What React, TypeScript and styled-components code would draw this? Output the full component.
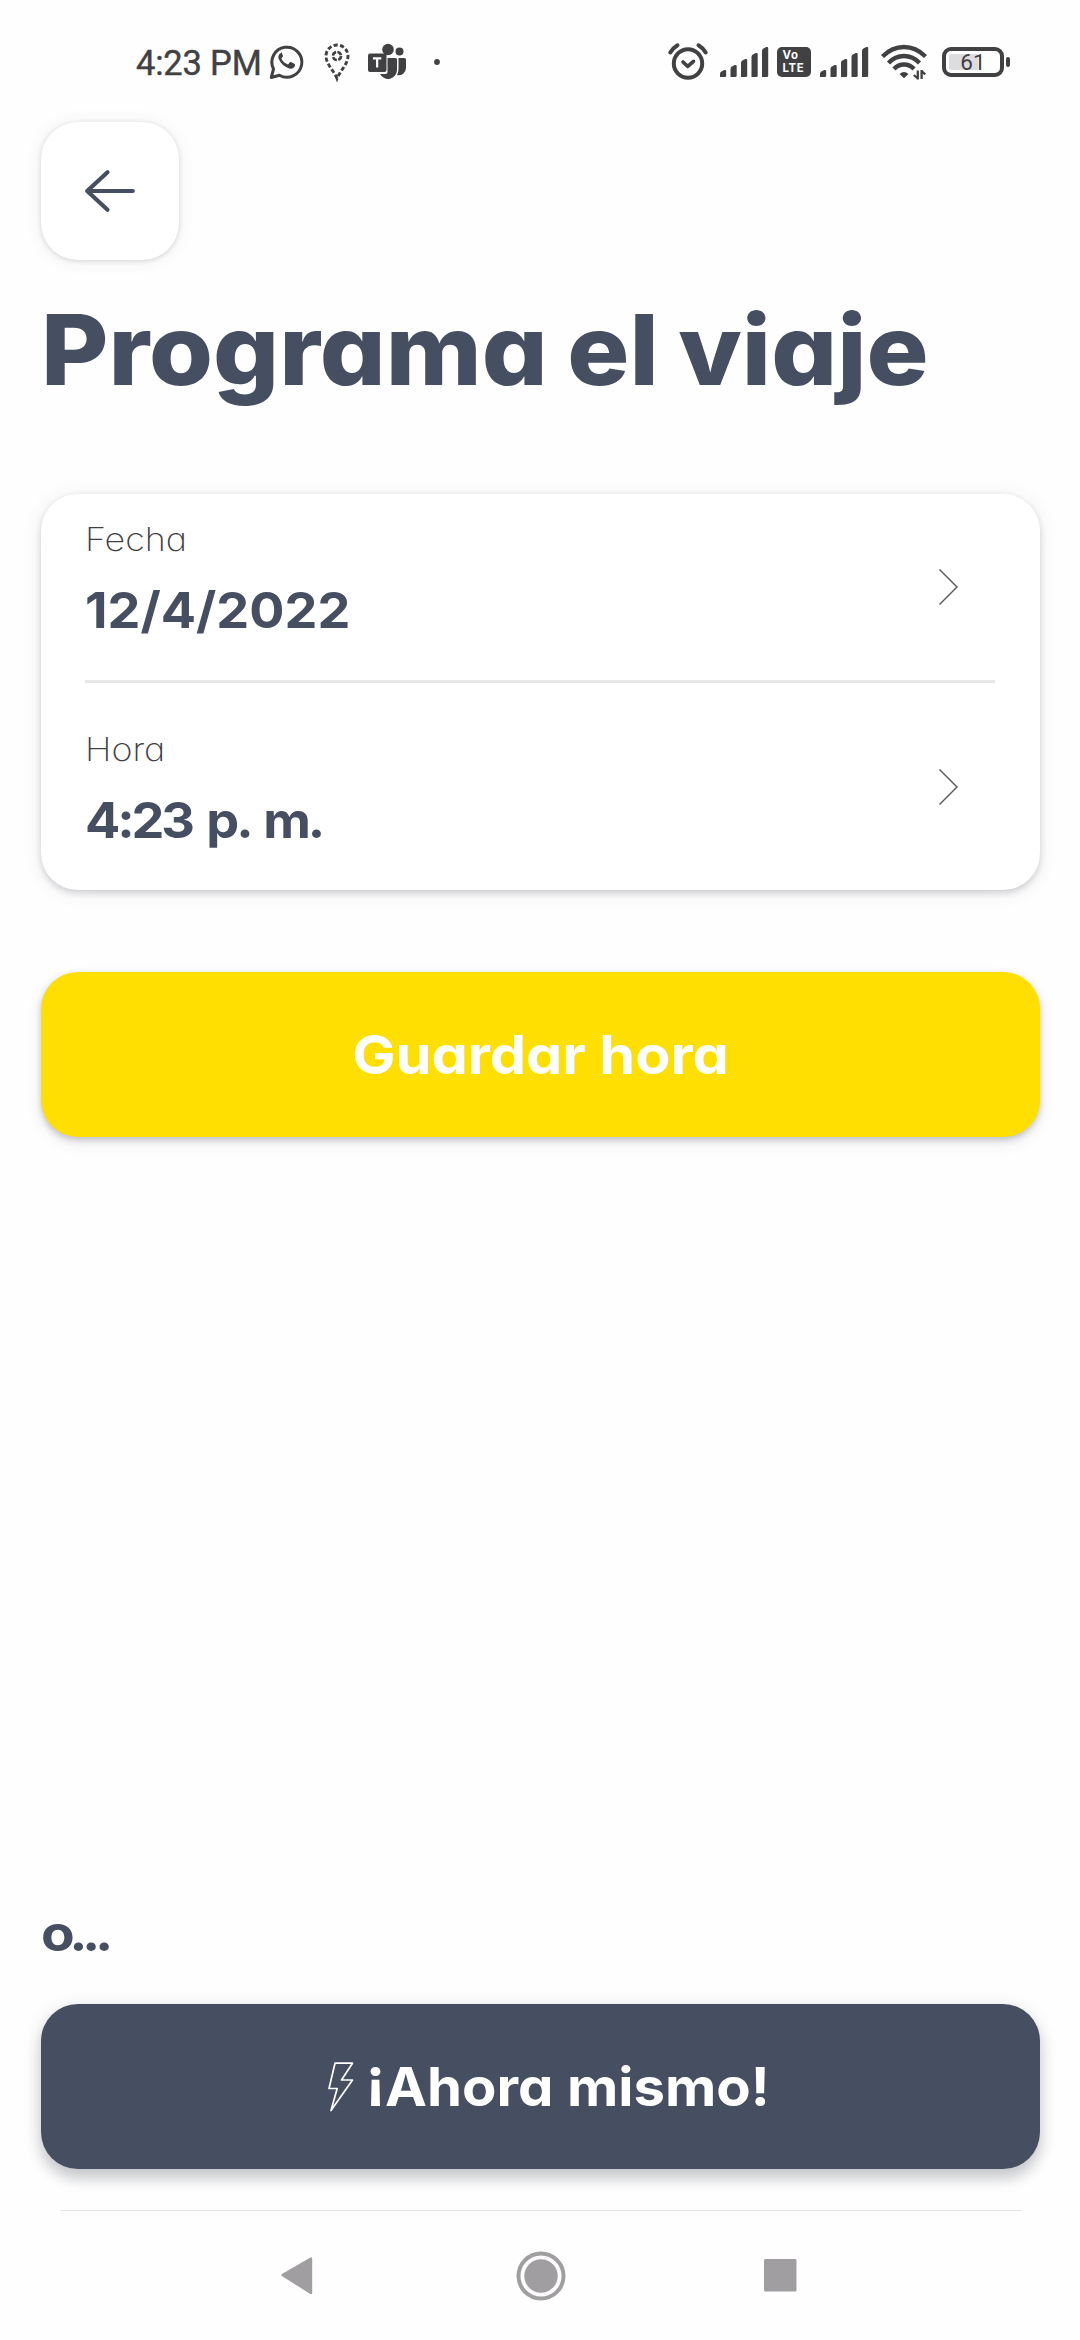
import React from 'react';
import styled, { createGlobalStyle } from 'styled-components';

const INK = '#464e62';
const STATUS = '#414043';

const GlobalStyle = createGlobalStyle`
  * { box-sizing: border-box; }
  body { margin: 0; background: #fefefe; }
`;

const Screen = styled.div`
  width: 1080px;
  height: 2340px;
  display: flex;
  flex-direction: column;
  overflow: hidden;
  background: #fefefe;
  color: ${INK};
  font-family: Inter, 'Liberation Sans', sans-serif;
  font-feature-settings: 'cv11', 'ss03';
`;

const StatusBar = styled.header`
  height: 122px;
  flex: none;
  display: flex;
  align-items: flex-start;
  justify-content: space-between;
  padding: 42px 70px 0 136px;
`;

const StatusGroup = styled.div`
  display: flex;
  align-items: center;
  height: 40px;
`;

const Clock = styled.span`
  width: 133px;
  padding-top: 2px;
  font: 400 34.5px/40px Roboto, sans-serif;
  letter-spacing: -0.2px;
  color: ${STATUS};
  -webkit-text-stroke: 0.4px ${STATUS};
  white-space: nowrap;
`;

const Glyph = styled.svg<{ $before?: number }>`
  display: block;
  flex: none;
  margin-left: ${(p) => p.$before ?? 0}px;
  overflow: visible;
`;

const Content = styled.main`
  flex: 1;
  display: flex;
  flex-direction: column;
  padding: 0 40px 0 41px;
`;

const BackButton = styled.button`
  width: 138px;
  height: 138px;
  flex: none;
  display: flex;
  align-items: center;
  justify-content: center;
  border: 0;
  border-radius: 37px;
  background: #fff;
  box-shadow: 0 1px 5px rgba(60, 50, 70, 0.18), 0 1px 18px rgba(60, 50, 70, 0.07);
`;

const Title = styled.h1`
  margin: 40px 0 94px;
  font-size: 98px;
  line-height: 100px;
  font-weight: 800;
  word-spacing: -3px;
  white-space: nowrap;
  transform: scaleX(1.056);
  transform-origin: left;
`;

const Card = styled.section`
  height: 396px;
  flex: none;
  display: flex;
  flex-direction: column;
  padding: 0 44px;
  border-radius: 37px;
  background: #fff;
  box-shadow: 0 3px 6px rgba(60, 50, 70, 0.2), 0 2px 20px rgba(60, 50, 70, 0.09);
`;

const Row = styled.div`
  display: flex;
  align-items: center;
  justify-content: space-between;
  padding-right: 38px;
`;

const Field = styled.div<{ $top: number }>`
  display: flex;
  flex-direction: column;
  gap: 20px;
  padding: ${(p) => p.$top}px 0 40px;
`;

const Label = styled.span`
  font-size: 32px;
  line-height: 40px;
  font-weight: 200;
  color: #3f4046;
  transform: scaleX(1.12);
  transform-origin: left;
`;

const Value = styled.span<{ $track: number; $word: number }>`
  font-size: 50px;
  line-height: 60px;
  font-weight: 700;
  letter-spacing: ${(p) => p.$track}px;
  word-spacing: ${(p) => p.$word}px;
  white-space: pre;
  transform: scaleX(1.045);
  transform-origin: left;
`;

const Divider = styled.hr`
  width: 910px;
  height: 3px;
  flex: none;
  margin: 0;
  border: 0;
  background: #e7e6e8;
`;

const ActionButton = styled.button<{ $fill: string; $shadow: string }>`
  height: 165px;
  flex: none;
  display: flex;
  align-items: center;
  justify-content: center;
  gap: 12px;
  padding: 0;
  border: 0;
  border-radius: 37px;
  background: ${(p) => p.$fill};
  box-shadow: ${(p) => p.$shadow};
  color: #fff;
  font: inherit;
  font-feature-settings: 'cv11', 'ss03', 'case';
  font-size: 54px;
  font-weight: 700;
`;

const SaveSlot = styled.div`
  display: flex;
  flex-direction: column;
  margin-top: 82px;
`;

const NowSlot = styled.div`
  display: flex;
  flex-direction: column;
  margin-top: auto;
  padding-bottom: 41px;
`;

const ButtonText = styled.span<{ $stretch: number; $origin: string }>`
  line-height: 66px;
  white-space: nowrap;
  transform: scaleX(${(p) => p.$stretch});
  transform-origin: ${(p) => p.$origin};
`;

const Or = styled.p`
  margin: 0 0 41px;
  font-size: 50px;
  line-height: 60px;
  font-weight: 700;
  letter-spacing: -5px;
  transform: scaleX(1.1);
  transform-origin: left;
`;

const NavBar = styled.nav`
  height: 130px;
  flex: none;
  display: flex;
  align-items: center;
  justify-content: space-between;
  margin: 0 58px 0 60px;
  padding: 0 225px 0 221px;
  border-top: 1px solid #e6e4e8;
`;

const WhatsApp = () => (
  <Glyph width="36" height="36" viewBox="0 0 36 36" fill="none">
    <path d="M2.300 33.500 4.500 25A15 15 0 1 1 10.400 31.200Z" stroke={STATUS} strokeWidth="3" strokeLinejoin="round" />
    <path d="M12.200 9.300c-.7 0-1.500.3-2.100 1-1.400 1.600-1.600 3.500-.8 5.700 2.200 5.200 6.300 8.800 11.500 10.300 2.600.7 5.300-.6 6.100-3 .3-1 .2-1.700-.2-2l-4.100-2.100c-.5-.2-.9-.1-1.200.3l-1.500 1.900c-.3.4-.7.5-1.200.3-2.800-1.200-4.900-3-6.300-5.700-.3-.5-.2-.8.1-1.200l1.200-1.500c.2-.4.3-.7.1-1.200l-1.600-3.900c-.2-.4-.5-.6-.9-.6Z" transform="translate(1.200 .4) scale(.92)" fill={STATUS} />
  </Glyph>
);

const DottedPin = () => (
  <Glyph $before={19} width="26" height="38" viewBox="0 0 26 38" fill="none" stroke={STATUS}>
    <path d="M13 35.500C10 28 2 21 2 13a11 11 0 0 1 22 0c0 8-8 15-11 22.500Z" strokeWidth="2.900" strokeDasharray="4.200 2.300" />
    <circle cx="13" cy="13" r="4" strokeWidth="2.600" strokeDasharray="4.800 1.480" />
  </Glyph>
);

const Teams = () => (
  <Glyph $before={18} width="39" height="38" viewBox="0 0 39 38" fill={STATUS}>
    <circle cx="20" cy="6.500" r="5.800" />
    <circle cx="31.500" cy="8.500" r="4" />
    <path d="M30.500 15H36.500Q38 15 38 16.500V25a7.500 7.500 0 0 1-9 7.200Q30.500 29.500 30.500 26Z" />
    <path d="M19.500 15H27.500Q29 15 29 16.500V27a9 9 0 0 1-17 4H17.500Q19.500 31 19.500 29Z" />
    <rect x="0" y="10.500" width="18.500" height="18.500" rx="2" />
    <path d="M5 15.300H13.300M9.150 15.300V24.500" stroke="#fefefe" strokeWidth="2.200" />
  </Glyph>
);

const Alarm = () => (
  <Glyph width="40" height="38" viewBox="0 0 40 38" fill="none" stroke={STATUS} strokeLinecap="round" strokeLinejoin="round">
    <circle cx="20" cy="20.500" r="14.200" strokeWidth="4" />
    <path d="M2.300 9.500Q5 5 9.500 2.300M30.500 2.300Q35 5 37.700 9.500" strokeWidth="4" />
    <path d="M15 19 19.700 23.300 25.500 18.300" strokeWidth="3.600" />
  </Glyph>
);

const BARS = [
  [0, 24],
  [10.5, 19],
  [21, 13],
  [31.5, 7],
  [42, 1],
];

const Signal = ({ before }: { before: number }) => (
  <Glyph $before={before} width="48" height="32" viewBox="0 0 48 32" fill={STATUS}>
    {BARS.map(([x, y]) => (
      <path
        key={x}
        d={`M${x} 31V${y + 4}Q${x} ${y + 2.5} ${x + 1} ${y + 1.8}L${x + 4.2} ${y}Q${x + 6.2} ${y - 0.5} ${x + 6.2} ${y + 1}V29.5Q${x + 6.2} 31 ${x + 4.7} 31Z`}
      />
    ))}
  </Glyph>
);

const VolteBadge = styled.span`
  width: 34px;
  height: 30px;
  margin-left: 9px;
  padding: 2px 0 0 5.5px;
  display: flex;
  flex-direction: column;
  border-radius: 5px;
  background: ${STATUS};
  color: #fefefe;
  font: 700 11.4px/13px Inter, sans-serif;
  letter-spacing: 0.6px;
`;

const Wifi = () => (
  <Glyph $before={13} width="47" height="36" viewBox="0 0 47 36" fill="none" stroke={STATUS} strokeWidth="4.300">
    <path d="M1.500 12.500Q11 3 23 3T44.500 12.500" />
    <path d="M7.500 19Q14 12 23 12T38.500 19" />
    <path d="M13 25Q17 20.500 23 20.500T33 25" />
    <path d="M18.500 30Q23 26 27.500 30L23 34.300Z" fill={STATUS} stroke="none" />
    <path d="M36.800 35.500V26.500M36.800 34.500 32.800 31M40.600 26V35M40.600 27 44.200 30.300" strokeWidth="2.300" />
  </Glyph>
);

const Battery = styled.span`
  width: 62px;
  height: 30px;
  margin-left: 14px;
  padding: 3px;
  display: flex;
  border: 4px solid ${STATUS};
  border-radius: 9px;
`;

const Charge = styled.span`
  width: 48px;
  height: 16px;
  display: flex;
  align-items: center;
  justify-content: center;
  border-radius: 2px;
  background: linear-gradient(90deg, #dddcdf 61%, transparent 61%);
  color: ${STATUS};
  font: 400 22.500px/18px Roboto, sans-serif;
`;

const BatteryTip = styled.span`
  width: 4px;
  height: 10px;
  margin-left: 2px;
  border-radius: 2px;
  background: ${STATUS};
`;

const Chevron = () => (
  <Glyph width="20" height="38" viewBox="0 0 20 38" fill="none">
    <path d="M1.500 1.500 19 19 1.500 36.500" stroke="#56555a" strokeWidth="1.400" />
  </Glyph>
);

export default function App() {
  return (
    <Screen>
      <GlobalStyle />
      <StatusBar>
        <StatusGroup>
          <Clock>4:23 PM</Clock>
          <WhatsApp />
          <DottedPin />
          <Teams />
          <Glyph $before={27} width="6" height="6" viewBox="0 0 6 6">
            <circle cx="3" cy="3" r="2.900" fill={STATUS} />
          </Glyph>
        </StatusGroup>
        <StatusGroup>
          <Alarm />
          <Signal before={12} />
          <VolteBadge>
            <span>Vo</span>
            <span>LTE</span>
          </VolteBadge>
          <Signal before={9} />
          <Wifi />
          <Battery>
            <Charge>61</Charge>
          </Battery>
          <BatteryTip />
        </StatusGroup>
      </StatusBar>
      <Content>
        <BackButton aria-label="Volver">
          <Glyph width="50" height="42" viewBox="0 0 50 42" fill="none">
            <path d="M22.500 2.200 2.200 21 22.500 39.800M2.200 21H47.800" stroke={INK} strokeWidth="4.200" strokeLinecap="round" strokeLinejoin="round" />
          </Glyph>
        </BackButton>
        <Title>Programa el viaje</Title>
        <Card>
          <Row>
            <Field $top={26}>
              <Label>Fecha</Label>
              <Value $track={0} $word={0}>12/4/2022</Value>
            </Field>
            <Chevron />
          </Row>
          <Divider />
          <Row>
            <Field $top={47}>
              <Label>Hora</Label>
              <Value $track={-3} $word={5}>4:23 p. m.</Value>
            </Field>
            <Chevron />
          </Row>
        </Card>
        <SaveSlot>
          <ActionButton $fill="#fedf01" $shadow="0 3px 6px rgba(60, 60, 70, 0.26), 0 6px 16px rgba(60, 60, 70, 0.09)">
            <ButtonText $stretch={1.066} $origin="center">Guardar hora</ButtonText>
          </ActionButton>
        </SaveSlot>
        <NowSlot>
          <Or>o...</Or>
          <ActionButton $fill={INK} $shadow="0 10px 14px rgba(60, 64, 78, 0.22), 0 3px 18px rgba(60, 60, 70, 0.12)">
            <Glyph width="26" height="50" viewBox="0 0 26 50" fill="none">
              <path d="M7 1.200H24.500L13.500 18H24.500L3 48.500 9.200 26.500H1Z" stroke="#fff" strokeWidth="1.700" strokeLinejoin="round" />
            </Glyph>
            <ButtonText $stretch={1.042} $origin="left">¡Ahora mismo!</ButtonText>
          </ActionButton>
        </NowSlot>
      </Content>
      <NavBar>
        <Glyph width="32" height="38" viewBox="0 0 32 38">
          <path d="M1.500 18 30 1.500V36Z" fill="#a09ea1" stroke="#a09ea1" strokeWidth="2.400" strokeLinejoin="round" />
        </Glyph>
        <Glyph $before={5} width="50" height="50" viewBox="0 0 50 50">
          <circle cx="25" cy="25" r="22.500" fill="none" stroke="#a09ea1" strokeWidth="4" />
          <circle cx="25" cy="25" r="16.700" fill="#a09ea1" />
        </Glyph>
        <Glyph width="33" height="33" viewBox="0 0 33 33">
          <rect width="32.500" height="32.500" rx="1.500" fill="#a09ea1" />
        </Glyph>
      </NavBar>
    </Screen>
  );
}
